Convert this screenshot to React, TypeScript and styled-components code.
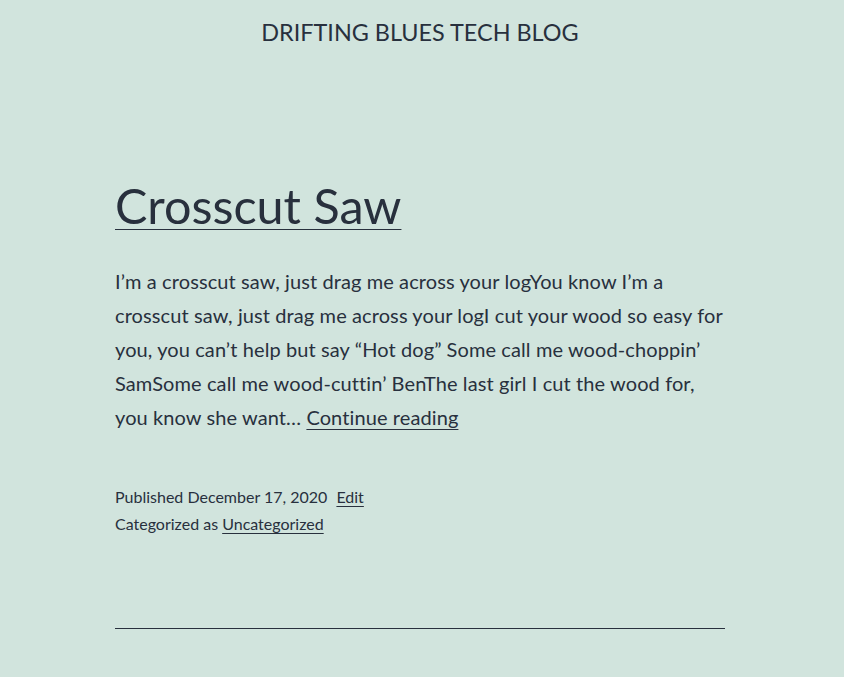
import React from "react";
import styled, { createGlobalStyle } from "styled-components";

const Global = createGlobalStyle`
  html, body { margin: 0; padding: 0; background: #d1e4dd; }
  body { font-family: Lato, "Open Sans", sans-serif; color: #28303d; }
`;

const Page = styled.div`
  width: 840px;
  min-height: 677px;
  display: flex;
  flex-direction: column;
  align-items: center;
`;

const Header = styled.header`
  padding-top: 17px;
  font-size: 23.4px;
  line-height: 30px;
  text-transform: uppercase;
`;

const Article = styled.article`
  width: 610px;
  margin-top: 127px;
  display: flex;
  flex-direction: column;
`;

const Title = styled.h2`
  margin: 0;
  font-size: 48.5px;
  font-weight: 400;
  line-height: 62px;
  a { color: inherit; text-decoration: underline; text-decoration-thickness: 1px; text-underline-offset: 5px; }
`;

const Excerpt = styled.p`
  margin: 28px 0 0;
  font-size: 20px;
  line-height: 34px;
  letter-spacing: 0.1px;
  a { color: inherit; text-decoration-thickness: 1px; text-underline-offset: 4px; }
`;

const Line = styled.span`
  display: block;
  white-space: nowrap;
`;

const Meta = styled.footer`
  margin-top: 49px;
  font-size: 16px;
  line-height: 27px;
  a { color: inherit; text-decoration-thickness: 1px; text-underline-offset: 3px; }
`;

const MetaRow = styled.div`
  display: flex;
  gap: 9px;
`;

const Rule = styled.hr`
  margin: 91px 0 0;
  border: 0;
  border-top: 1px solid #28303d;
  width: 610px;
`;

export default function App() {
  return (
    <>
      <Global />
      <Page>
        <Header>Drifting Blues Tech Blog</Header>
        <Article>
          <Title><a href="#">Crosscut Saw</a></Title>
          <Excerpt>
            <Line>I’m a crosscut saw, just drag me across your logYou know I’m a</Line>
            <Line>crosscut saw, just drag me across your logI cut your wood so easy for</Line>
            <Line>you, you can’t help but say “Hot dog” Some call me wood-choppin’</Line>
            <Line>SamSome call me wood-cuttin’ BenThe last girl I cut the wood for,</Line>
            <Line>you know she want… <a href="#">Continue reading</a></Line>
          </Excerpt>
          <Meta>
            <MetaRow><span>Published December 17, 2020</span><a href="#">Edit</a></MetaRow>
            <MetaRow><span>Categorized as <a href="#">Uncategorized</a></span></MetaRow>
          </Meta>
          <Rule />
        </Article>
      </Page>
    </>
  );
}
